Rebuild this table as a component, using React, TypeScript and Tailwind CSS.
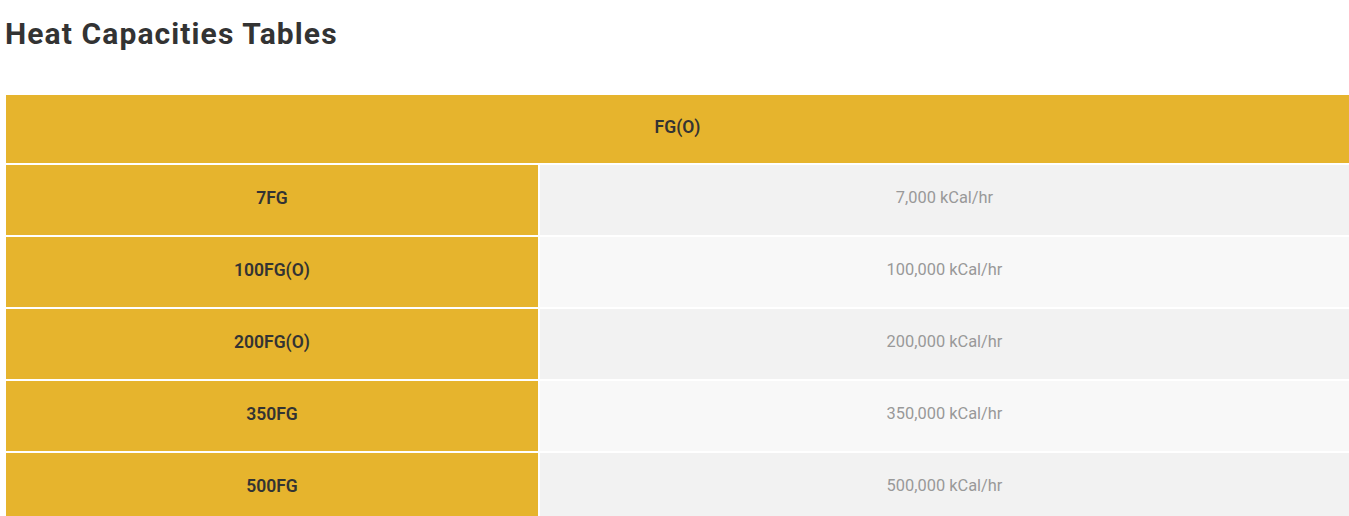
export default function App() {
  const rows = [
    ["7FG", "7,000 kCal/hr"],
    ["100FG(O)", "100,000 kCal/hr"],
    ["200FG(O)", "200,000 kCal/hr"],
    ["350FG", "350,000 kCal/hr"],
    ["500FG", "500,000 kCal/hr"],
  ];
  return (
    <div className="w-[1349px] h-[516px] overflow-hidden bg-white" style={{ fontFamily: "Roboto, 'Liberation Sans', sans-serif" }}>
      <h2 className="pt-[16px] pl-[5px] text-[30px] leading-[36px] font-bold text-[#333333] tracking-[1.1px]">Heat Capacities Tables</h2>
      <div className="mt-[43px] ml-[6px] flex flex-col gap-[2px] bg-white">
        <div className="h-[68px] pb-[4px] bg-[#e6b42d] flex items-center justify-center text-[17.5px] font-semibold text-[#333333]">FG(O)</div>
        {rows.map(([a, b], i) => (
          <div key={a} className="flex h-[70px] gap-[2px]">
            <div className="w-[532px] shrink-0 pb-[4px] bg-[#e6b42d] flex items-center justify-center text-[17.5px] font-semibold text-[#333333]">{a}</div>
            <div className={`flex-1 pb-[4px] flex items-center justify-center text-[16.4px] text-[#999999] ${i % 2 === 0 ? "bg-[#f2f2f2]" : "bg-[#f8f8f8]"}`}>{b}</div>
          </div>
        ))}
      </div>
    </div>
  );
}
